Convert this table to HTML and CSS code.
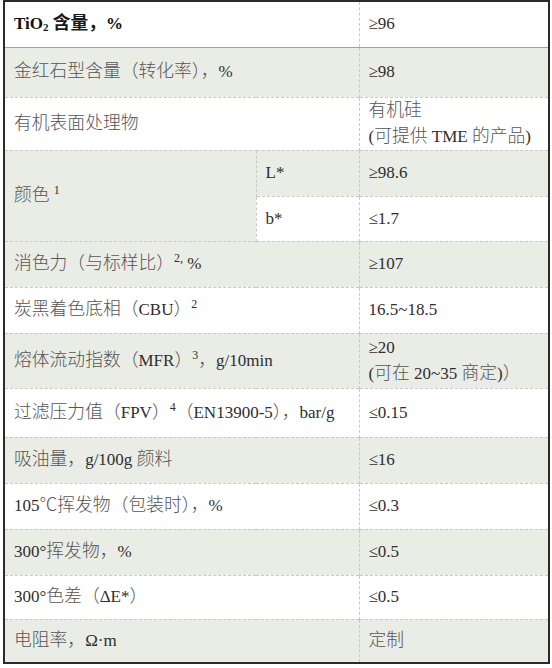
FILE: index.html
```html
<!DOCTYPE html>
<html lang="zh-CN">
<head>
<meta charset="utf-8">
<link rel="stylesheet" href="styles.css">
</head>
<body>
<table class="spec">
  <colgroup>
    <col class="c1"><col class="c2"><col class="c3">
  </colgroup>
  <tr class="r-head">
    <td colspan="2" class="bold">TiO<sub>2</sub> <span class="zh">含量，</span>%</td>
    <td>≥96</td>
  </tr>
  <tr class="alt r-tall">
    <td colspan="2"><span class="zh">金红石型含量（转化率），</span>%</td>
    <td>≥98</td>
  </tr>
  <tr class="r-two">
    <td colspan="2"><span class="zh">有机表面处理物</span></td>
    <td class="two"><span class="zh">有机硅</span><br>(<span class="zh">可提供</span> TME <span class="zh">的产品</span>)</td>
  </tr>
  <tr class="alt">
    <td rowspan="2" class="alt-cell"><span class="zh">颜色</span> <sup>1</sup></td>
    <td class="sub">L*</td>
    <td>≥98.6</td>
  </tr>
  <tr class="r-b">
    <td class="sub">b*</td>
    <td>≤1.7</td>
  </tr>
  <tr class="alt">
    <td colspan="2"><span class="zh">消色力（与标样比）</span><sup>2,</sup> %</td>
    <td>≥107</td>
  </tr>
  <tr>
    <td colspan="2"><span class="zh">炭黑着色底相（</span>CBU<span class="zh">）</span><sup>2</sup></td>
    <td>16.5~18.5</td>
  </tr>
  <tr class="alt r-two2">
    <td colspan="2"><span class="zh">熔体流动指数（</span>MFR<span class="zh">）</span><sup>3</sup><span class="zh">，</span>g/10min</td>
    <td class="two">≥20<br>(<span class="zh">可在</span> 20~35 <span class="zh">商定</span>)<span class="zh">）</span></td>
  </tr>
  <tr class="r-tall2">
    <td colspan="2"><span class="zh">过滤压力值（</span>FPV<span class="zh">）</span><sup>4</sup><span class="zh">（</span>EN13900-5<span class="zh">），</span>bar/g</td>
    <td>≤0.15</td>
  </tr>
  <tr class="alt">
    <td colspan="2"><span class="zh">吸油量，</span>g/100g <span class="zh">颜料</span></td>
    <td>≤16</td>
  </tr>
  <tr>
    <td colspan="2">105<span class="zh">℃挥发物（包装时），</span>%</td>
    <td>≤0.3</td>
  </tr>
  <tr class="alt">
    <td colspan="2">300°<span class="zh">挥发物，</span>%</td>
    <td>≤0.5</td>
  </tr>
  <tr class="r-short">
    <td colspan="2">300°<span class="zh">色差（</span>ΔE*<span class="zh">）</span></td>
    <td>≤0.5</td>
  </tr>
  <tr class="alt r-short">
    <td colspan="2"><span class="zh">电阻率，</span>Ω·m</td>
    <td><span class="zh">定制</span></td>
  </tr>
</table>
</body>
</html>
```

FILE: styles.css
```css
html, body {
  margin: 0;
  padding: 0;
  background: #ffffff;
}

body {
  padding: 0 2px 0 3px;
}

.spec {
  width: 547px;
  border-collapse: collapse;
  border: 2px solid #2b2b2b;
  font-family: "Liberation Serif", "Noto Sans CJK SC", serif;
  font-size: 17px;
  color: #2e2e2e;
  table-layout: fixed;
}

.c1 { width: 252px; }
.c2 { width: 103px; }
.c3 { width: auto; }

.spec td {
  height: 46px;
  padding: 0 8px 0 9px;
  border-top: 1px dashed #c9c9c9;
  border-left: 1px dashed #c9c9c9;
  vertical-align: middle;
  line-height: 26px;
  white-space: nowrap;
  box-sizing: border-box;
}

.spec tr:first-child td {
  border-top: none;
}

.spec tr:nth-child(2) td {
  border-top: 1px solid #8faf7e;
}

.alt td,
.alt-cell {
  background: #e9ede5;
}

.r-b td {
  background: #ffffff;
}

.zh {
  font-family: "Noto Sans CJK SC", sans-serif;
  font-size: 17.8px;
  font-weight: 300;
  line-height: 1;
  color: #555555;
}

.bold {
  font-weight: bold;
  color: #111111;
}

.bold .zh {
  font-weight: bold;
  color: #1a1a1a;
}

.bold sub {
  font-size: 11px;
  line-height: 1;
  vertical-align: baseline;
  position: relative;
  top: 2px;
}

sup {
  font-size: 12px;
  line-height: 1;
  vertical-align: baseline;
  position: relative;
  top: -7px;
}

.r-head td { height: 46px; }
.r-tall td { height: 50px; }
.r-two td { height: 53px; }
.r-two2 td { height: 55px; }
.r-tall2 td { height: 49px; }
.r-short td { height: 44px; }
.r-b td { height: 45px; }

.two {
  line-height: 27px;
}
```
